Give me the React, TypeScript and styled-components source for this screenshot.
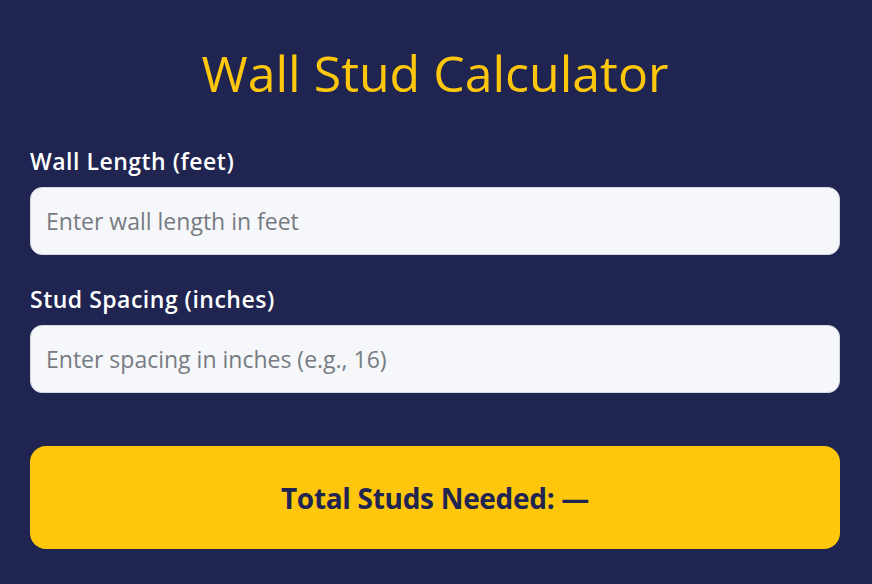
import React from "react";
import styled, { createGlobalStyle } from "styled-components";

const GlobalStyle = createGlobalStyle`
  html, body {
    margin: 0;
    padding: 0;
    background: #1f2450;
  }
  * {
    box-sizing: border-box;
  }
`;

const Page = styled.main`
  min-height: 584px;
  background: #1f2450;
  padding: 38px 32px 0 30px;
  font-family: "Open Sans", "Noto Sans", sans-serif;
  display: flex;
  flex-direction: column;
`;

const Title = styled.h1`
  margin: 0 0 37px;
  text-align: center;
  color: #fec70c;
  font-size: 50px;
  font-weight: 400;
  line-height: 70px;
`;

const Field = styled.div`
  display: flex;
  flex-direction: column;
  gap: 10px;
  margin-bottom: 28px;
`;

const Label = styled.label`
  color: #ffffff;
  font-size: 23px;
  font-weight: 600;
  line-height: 32px;
  letter-spacing: 0.5px;
`;

const Input = styled.input`
  height: 68px;
  width: 100%;
  border: 1px solid #d3d7de;
  border-radius: 12px;
  background: #f5f7fa;
  padding: 0 15px;
  font-family: inherit;
  font-size: 23px;
  color: #1f2450;
  outline: none;

  &::placeholder {
    color: #777b82;
  }
`;

const Result = styled.div`
  margin-top: 25px;
  height: 103px;
  border-radius: 16px;
  background: #fec70c;
  color: #1f2450;
  display: flex;
  align-items: center;
  justify-content: center;
  font-size: 28px;
  font-weight: 700;
  letter-spacing: -0.3px;
`;

export default function App() {
  return (
    <>
      <GlobalStyle />
      <Page>
        <Title>Wall Stud Calculator</Title>
        <Field>
          <Label htmlFor="length">Wall Length (feet)</Label>
          <Input id="length" type="number" placeholder="Enter wall length in feet" />
        </Field>
        <Field>
          <Label htmlFor="spacing">Stud Spacing (inches)</Label>
          <Input id="spacing" type="number" placeholder="Enter spacing in inches (e.g., 16)" />
        </Field>
        <Result>Total Studs Needed: —</Result>
      </Page>
    </>
  );
}
